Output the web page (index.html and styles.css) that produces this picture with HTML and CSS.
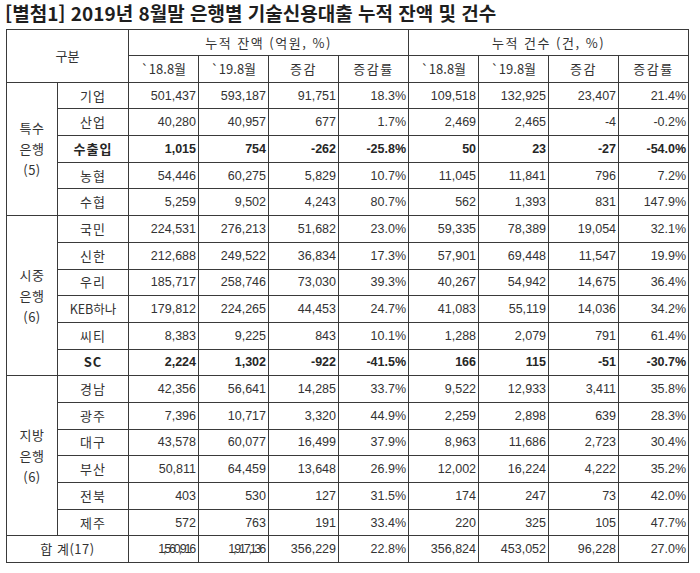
FILE: index.html
```html
<!DOCTYPE html>
<html lang="ko">
<head>
<meta charset="utf-8">
<link rel="stylesheet" href="styles.css">
</head>
<body>
<h1 class="title">[별첨1] 2019년 8월말 은행별 기술신용대출 누적 잔액 및 건수</h1>
<table class="grid">
  <colgroup>
    <col class="c-group"><col class="c-name">
    <col class="c-num"><col class="c-num"><col class="c-num"><col class="c-num">
    <col class="c-num"><col class="c-num"><col class="c-num"><col class="c-num">
  </colgroup>
  <thead>
    <tr>
      <th colspan="2" rowspan="2">구분</th>
      <th colspan="4" class="wide">누적 잔액 (억원, %)</th>
      <th colspan="4" class="wide">누적 건수 (건, %)</th>
    </tr>
    <tr>
      <th>`18.8월</th><th>`19.8월</th><th class="wide">증감</th><th class="wide">증감률</th>
      <th>`18.8월</th><th>`19.8월</th><th class="wide">증감</th><th class="wide">증감률</th>
    </tr>
  </thead>
  <tbody>
    <tr><td class="grp" rowspan="5">특수<br>은행<br>(5)</td><td class="name">기업</td><td>501,437</td><td>593,187</td><td>91,751</td><td>18.3%</td><td>109,518</td><td>132,925</td><td>23,407</td><td>21.4%</td></tr>
    <tr><td class="name">산업</td><td>40,280</td><td>40,957</td><td>677</td><td>1.7%</td><td>2,469</td><td>2,465</td><td>-4</td><td>-0.2%</td></tr>
    <tr class="bold"><td class="name">수출입</td><td>1,015</td><td>754</td><td>-262</td><td>-25.8%</td><td>50</td><td>23</td><td>-27</td><td>-54.0%</td></tr>
    <tr><td class="name">농협</td><td>54,446</td><td>60,275</td><td>5,829</td><td>10.7%</td><td>11,045</td><td>11,841</td><td>796</td><td>7.2%</td></tr>
    <tr><td class="name">수협</td><td>5,259</td><td>9,502</td><td>4,243</td><td>80.7%</td><td>562</td><td>1,393</td><td>831</td><td>147.9%</td></tr>

    <tr><td class="grp" rowspan="6">시중<br>은행<br>(6)</td><td class="name">국민</td><td>224,531</td><td>276,213</td><td>51,682</td><td>23.0%</td><td>59,335</td><td>78,389</td><td>19,054</td><td>32.1%</td></tr>
    <tr><td class="name">신한</td><td>212,688</td><td>249,522</td><td>36,834</td><td>17.3%</td><td>57,901</td><td>69,448</td><td>11,547</td><td>19.9%</td></tr>
    <tr><td class="name">우리</td><td>185,717</td><td>258,746</td><td>73,030</td><td>39.3%</td><td>40,267</td><td>54,942</td><td>14,675</td><td>36.4%</td></tr>
    <tr><td class="name keb">KEB하나</td><td>179,812</td><td>224,265</td><td>44,453</td><td>24.7%</td><td>41,083</td><td>55,119</td><td>14,036</td><td>34.2%</td></tr>
    <tr><td class="name">씨티</td><td>8,383</td><td>9,225</td><td>843</td><td>10.1%</td><td>1,288</td><td>2,079</td><td>791</td><td>61.4%</td></tr>
    <tr class="bold"><td class="name">SC</td><td>2,224</td><td>1,302</td><td>-922</td><td>-41.5%</td><td>166</td><td>115</td><td>-51</td><td>-30.7%</td></tr>

    <tr><td class="grp" rowspan="6">지방<br>은행<br>(6)</td><td class="name">경남</td><td>42,356</td><td>56,641</td><td>14,285</td><td>33.7%</td><td>9,522</td><td>12,933</td><td>3,411</td><td>35.8%</td></tr>
    <tr><td class="name">광주</td><td>7,396</td><td>10,717</td><td>3,320</td><td>44.9%</td><td>2,259</td><td>2,898</td><td>639</td><td>28.3%</td></tr>
    <tr><td class="name">대구</td><td>43,578</td><td>60,077</td><td>16,499</td><td>37.9%</td><td>8,963</td><td>11,686</td><td>2,723</td><td>30.4%</td></tr>
    <tr><td class="name">부산</td><td>50,811</td><td>64,459</td><td>13,648</td><td>26.9%</td><td>12,002</td><td>16,224</td><td>4,222</td><td>35.2%</td></tr>
    <tr><td class="name">전북</td><td>403</td><td>530</td><td>127</td><td>31.5%</td><td>174</td><td>247</td><td>73</td><td>42.0%</td></tr>
    <tr><td class="name">제주</td><td>572</td><td>763</td><td>191</td><td>33.4%</td><td>220</td><td>325</td><td>105</td><td>47.7%</td></tr>

    <tr class="total"><td class="name" colspan="2">합 계(17)</td><td><span class="squish">1,560,916</span></td><td><span class="squish">1,917,136</span></td><td>356,229</td><td>22.8%</td><td>356,824</td><td>453,052</td><td>96,228</td><td>27.0%</td></tr>
  </tbody>
</table>
</body>
</html>
```

FILE: styles.css
```css
html, body {
  margin: 0;
  padding: 0;
  background: #ffffff;
}

body {
  width: 700px;
  height: 573px;
  overflow: hidden;
}

.title {
  margin: 0;
  padding: 0 0 0 5px;
  height: 28px;
  box-sizing: border-box;
  font-family: "Noto Sans CJK KR", sans-serif;
  font-size: 19px;
  line-height: 26px;
  font-weight: bold;
  color: #1e1e1e;
}

.grid {
  margin: 1px 0 0 6px;
  width: 682px;
  table-layout: fixed;
  border-collapse: collapse;
  border: 1.5px solid #2a2a2a;
  font-family: "Liberation Sans", "Noto Sans CJK KR", sans-serif;
  font-size: 12.5px;
  color: #333333;
}

.c-group { width: 51px; }
.c-name { width: 71px; }
.c-num { width: 70px; }

.grid th,
.grid td {
  border: 1px solid #3a3a3a;
  padding: 0 2px 0 0;
  height: 25.7px;
  line-height: 16px;
  overflow: visible;
  white-space: nowrap;
}

.grid th {
  font-weight: normal;
  text-align: center;
  padding: 0;
  font-family: "Noto Sans CJK KR", sans-serif;
  font-size: 13px;
}

.grid th.wide {
  letter-spacing: 1.5px;
}

.grid thead tr:first-child th {
  height: 25px;
}

.grid td {
  text-align: right;
}

.grid td.name,
.grid td.grp {
  text-align: center;
  padding: 0;
  font-family: "Noto Sans CJK KR", sans-serif;
  letter-spacing: 1px;
  font-size: 13px;
}

.grid td.name.keb {
  letter-spacing: 0;
  font-size: 12.5px;
}

.grid td.grp {
  line-height: 21px;
  letter-spacing: 0.5px;
}

.bold td {
  font-weight: bold;
  color: #262626;
}

.total td.name {
  letter-spacing: 0.5px;
}

.squish {
  display: inline-block;
  letter-spacing: -2.2px;
  margin-right: 2px;
}
```
